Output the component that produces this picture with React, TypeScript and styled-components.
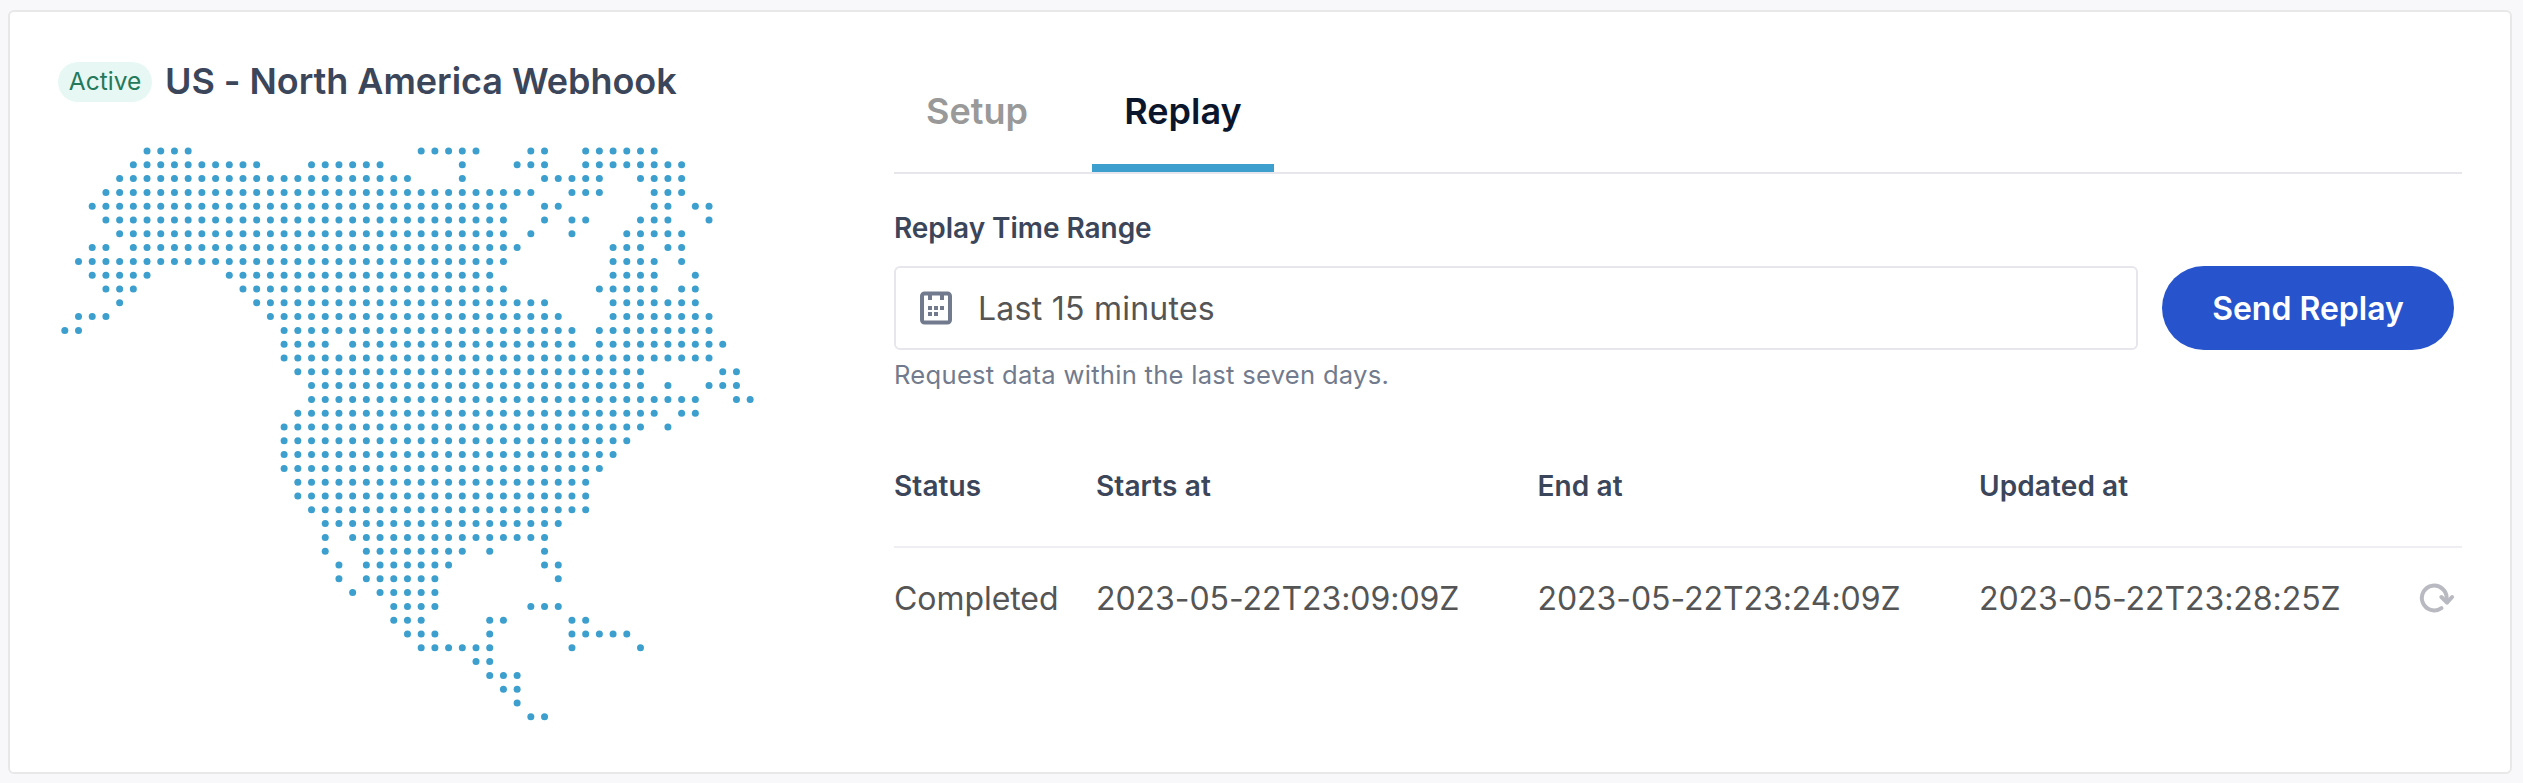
import React from "react";
import styled, { createGlobalStyle } from "styled-components";

const GlobalStyle = createGlobalStyle`
  * { box-sizing: border-box; }
  body { margin: 0; background: #f8f8fa; font-family: Inter, "Liberation Sans", sans-serif; }
`;

const Page = styled.div`
  height: 783px;
  padding: 10px 11px 9px 8px;
`;

const Card = styled.section`
  display: flex;
  height: 764px;
  background: #fff;
  border: 2px solid #e8e8e8;
  border-radius: 6px;
`;

const RegionPane = styled.div`
  width: 884px;
  padding: 48px 0 0 48px;
`;

const RegionHeader = styled.header`
  display: flex;
  align-items: center;
  height: 44px;
`;

const StatusBadge = styled.span`
  width: 94px;
  height: 40px;
  line-height: 39px;
  text-align: center;
  border-radius: 20px;
  background: #e7f8f4;
  color: #25795a;
  font-size: 24.5px;
`;

const RegionTitle = styled.h2`
  margin: 0 0 3px 13px;
  font-size: 36px;
  line-height: 44px;
  font-weight: 600;
  letter-spacing: -0.05px;
  color: #3c465a;
  white-space: nowrap;
`;

const DotMap = styled.svg`
  display: block;
  margin-top: 42px;
`;

const ReplayPane = styled.div`
  width: 1568px;
  padding-top: 60px;
`;

const Tabs = styled.nav`
  display: flex;
  gap: 32px;
  height: 102px;
  border-bottom: 2px solid #e6e6ec;
`;

const Tab = styled.button<{ $active?: boolean; $width: number }>`
  width: ${(p) => p.$width}px;
  padding: 0 0 14px;
  border: 0;
  border-bottom: 8px solid ${(p) => (p.$active ? "#3c9fcd" : "transparent")};
  background: none;
  color: ${(p) => (p.$active ? "#0b162c" : "#999")};
  font: 600 36px/44px Inter, sans-serif;
`;

const FieldLabel = styled.label`
  display: block;
  margin-top: 36px;
  height: 36px;
  font-size: 28px;
  line-height: 36px;
  font-weight: 600;
  letter-spacing: -0.05px;
  color: #3c465a;
`;

const FieldRow = styled.div`
  display: flex;
  gap: 24px;
  margin-top: 20px;
`;

const RangeField = styled.div`
  display: flex;
  align-items: center;
  gap: 25px;
  width: 1244px;
  height: 84px;
  padding-left: 23px;
  border: 2px solid #e6e6ec;
  border-radius: 6px;
  color: #555;
  font-size: 32px;
  letter-spacing: 0.25px;
`;

const SendButton = styled.button`
  width: 292px;
  height: 84px;
  padding: 2px 0 0;
  border: 0;
  border-radius: 42px;
  background: #2754cc;
  color: #fff;
  font: 600 32px/40px Inter, sans-serif;
`;

const Hint = styled.p`
  margin: 9px 0 0;
  font-size: 25.6px;
  line-height: 32px;
  letter-spacing: 0.27px;
  color: #727b8d;
`;

const Row = styled.div<{ $head?: boolean }>`
  display: grid;
  grid-template-columns: 202px 441.5px 441.5px 1fr auto;
  align-items: center;
  height: ${(p) => (p.$head ? 124 : 100)}px;
  margin-top: ${(p) => (p.$head ? 33 : 0)}px;
  padding: ${(p) => (p.$head ? 2 : 0)}px 7px 0 0;
  border-bottom: ${(p) => (p.$head ? "2px solid #eeeef3" : "0")};
  font-size: ${(p) => (p.$head ? 28 : 32)}px;
  font-weight: ${(p) => (p.$head ? 600 : 400)};
  letter-spacing: ${(p) => (p.$head ? 0.1 : -0.06)}px;
  color: ${(p) => (p.$head ? "#3c465a" : "#555")};
`;

// Inclusive [first, last] column spans of land, one list per map row.
const LAND: number[][][] = [
  [[6, 9], [26, 30], [34, 35], [38, 43]],
  [[5, 14], [18, 23], [29, 29], [33, 35], [38, 45]],
  [[4, 25], [29, 29], [35, 39], [42, 45]],
  [[3, 34], [37, 39], [43, 45]],
  [[2, 32], [35, 36], [43, 44], [46, 47]],
  [[3, 32], [35, 35], [37, 38], [42, 44], [47, 47]],
  [[4, 32], [34, 34], [37, 37], [41, 45]],
  [[2, 3], [5, 33], [40, 42], [44, 45]],
  [[1, 32], [40, 43], [45, 45]],
  [[2, 6], [12, 31], [40, 43], [46, 46]],
  [[3, 5], [13, 32], [39, 43], [45, 46]],
  [[4, 4], [14, 35], [40, 46]],
  [[1, 3], [15, 36], [40, 47]],
  [[0, 1], [16, 37], [39, 47]],
  [[16, 19], [21, 37], [39, 48]],
  [[16, 47]],
  [[17, 42], [48, 49]],
  [[18, 42], [44, 44], [47, 49]],
  [[18, 46], [49, 50]],
  [[17, 43], [45, 46]],
  [[16, 42], [44, 44]],
  [[16, 41]],
  [[16, 40]],
  [[16, 39]],
  [[17, 38]],
  [[17, 38]],
  [[18, 38]],
  [[19, 36]],
  [[19, 19], [21, 35]],
  [[19, 19], [22, 29], [31, 31], [35, 35]],
  [[20, 20], [22, 28], [35, 36]],
  [[20, 20], [22, 27], [36, 36]],
  [[21, 21], [23, 27]],
  [[24, 27], [34, 36]],
  [[24, 26], [31, 32], [37, 38]],
  [[25, 27], [31, 31], [37, 41]],
  [[26, 31], [37, 37], [42, 42]],
  [[30, 31]],
  [[31, 33]],
  [[32, 33]],
  [[33, 33]],
  [[34, 35]],
];

const dots = LAND.flatMap((spans, row) =>
  spans.flatMap(([from, to]) =>
    Array.from({ length: to - from + 1 }, (_, i) => ({ col: from + i, row }))
  )
);

function CalendarIcon() {
  return (
    <svg width="34" height="34" viewBox="0 0 34 34" fill="#727b8d">
      <rect x="3" y="2.5" width="28" height="29" rx="2.5" fill="none" stroke="#727b8d" strokeWidth="4" />
      <path d="M9 4h4v5H9zM21 4h4v5h-4zM9 15h4v4H9zM15 15h4v4h-4zM21 15h4v4h-4zM9 21h4v4H9zM15 21h4v4h-4z" />
    </svg>
  );
}

function RefreshIcon() {
  return (
    <svg width="36" height="32" viewBox="0 0 36 32" fill="none" stroke="#b9b9c1" strokeWidth="4" strokeLinecap="round" strokeLinejoin="round">
      <path d="M22.4 26.1A12.4 12.4 0 1 1 27.6 17" />
      <path d="M22.4 15l5.6 5.6L33.100 15" />
    </svg>
  );
}

export default function App() {
  return (
    <>
      <GlobalStyle />
      <Page>
        <Card>
          <RegionPane>
            <RegionHeader>
              <StatusBadge>Active</StatusBadge>
              <RegionTitle>US - North America Webhook</RegionTitle>
            </RegionHeader>
            <DotMap width="700" height="580" viewBox="0 0 700 580" fill="#3c9fcd">
              {dots.map((d) => (
                <circle key={`${d.row}-${d.col}`} cx={6.8 + d.col * 13.707} cy={5 + d.row * 13.8} r="3.5" />
              ))}
            </DotMap>
          </RegionPane>
          <ReplayPane>
            <Tabs>
              <Tab $width={166}>Setup</Tab>
              <Tab $active $width={182}>Replay</Tab>
            </Tabs>
            <FieldLabel>Replay Time Range</FieldLabel>
            <FieldRow>
              <RangeField>
                <CalendarIcon />
                <span>Last 15 minutes</span>
              </RangeField>
              <SendButton>Send Replay</SendButton>
            </FieldRow>
            <Hint>Request data within the last seven days.</Hint>
            <Row $head>
              <span>Status</span>
              <span>Starts at</span>
              <span>End at</span>
              <span>Updated at</span>
            </Row>
            <Row>
              <span>Completed</span>
              <span>2023-05-22T23:09:09Z</span>
              <span>2023-05-22T23:24:09Z</span>
              <span>2023-05-22T23:28:25Z</span>
              <RefreshIcon />
            </Row>
          </ReplayPane>
        </Card>
      </Page>
    </>
  );
}
